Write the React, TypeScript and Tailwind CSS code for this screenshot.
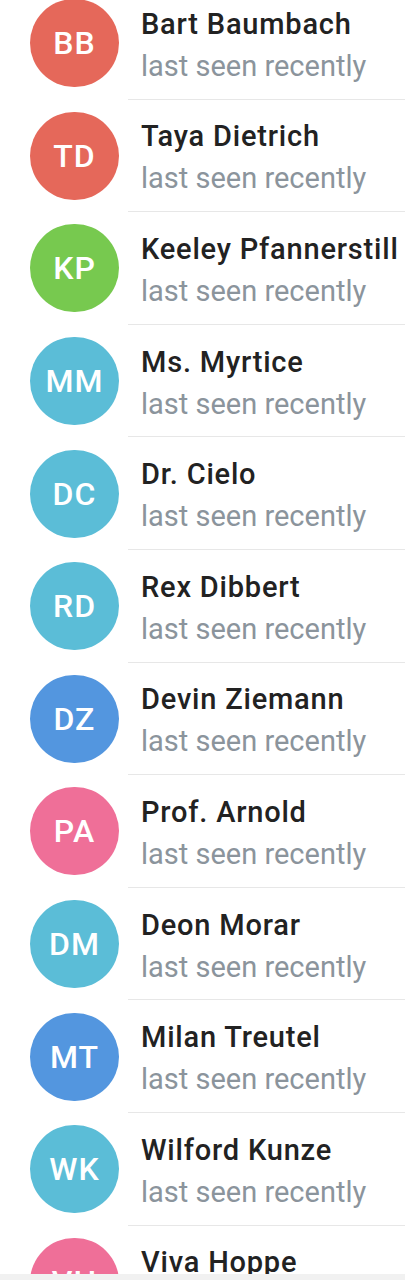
const contacts = [
  { initials: "BB", name: "Bart Baumbach", color: "bg-[#e5685a]" },
  { initials: "TD", name: "Taya Dietrich", color: "bg-[#e5685a]" },
  { initials: "KP", name: "Keeley Pfannerstill", color: "bg-[#77c94f]" },
  { initials: "MM", name: "Ms. Myrtice", color: "bg-[#5bbdd7]" },
  { initials: "DC", name: "Dr. Cielo", color: "bg-[#5bbdd7]" },
  { initials: "RD", name: "Rex Dibbert", color: "bg-[#5bbdd7]" },
  { initials: "DZ", name: "Devin Ziemann", color: "bg-[#5396df]" },
  { initials: "PA", name: "Prof. Arnold", color: "bg-[#ef6f98]" },
  { initials: "DM", name: "Deon Morar", color: "bg-[#5bbdd7]" },
  { initials: "MT", name: "Milan Treutel", color: "bg-[#5396df]" },
  { initials: "WK", name: "Wilford Kunze", color: "bg-[#5bbdd7]" },
  { initials: "VH", name: "Viva Hoppe", color: "bg-[#ef6f98]" },
];

export default function App() {
  return (
    <div className="h-[1280px] w-[405px] bg-white flex flex-col overflow-hidden font-['Roboto',sans-serif]">
      <div className="flex-1 overflow-hidden">
        <ul className="-mt-[13px]">
          {contacts.map((c) => (
            <li key={c.name} className="flex h-[112.6px]">
              <div className="w-[128px] shrink-0 pl-[30px] flex items-center">
                <div
                  className={`${c.color} w-[89px] h-[88px] rounded-full flex items-center justify-center text-white text-[32px] tracking-[1px] font-medium`}
                >
                  {c.initials}
                </div>
              </div>
              <div className="flex-1 min-w-0 border-b border-[#e7e7e7] pl-[13px] flex flex-col justify-center pt-[4px]">
                <div className="text-[29px] leading-[42px] tracking-[0.8px] font-medium text-[#222222] whitespace-nowrap">
                  {c.name}
                </div>
                <div className="text-[29px] leading-[42px] text-[#8b949c] whitespace-nowrap">
                  last seen recently
                </div>
              </div>
            </li>
          ))}
        </ul>
      </div>
      <div className="h-[6px] shrink-0 bg-[#f1f1f1]" />
    </div>
  );
}
